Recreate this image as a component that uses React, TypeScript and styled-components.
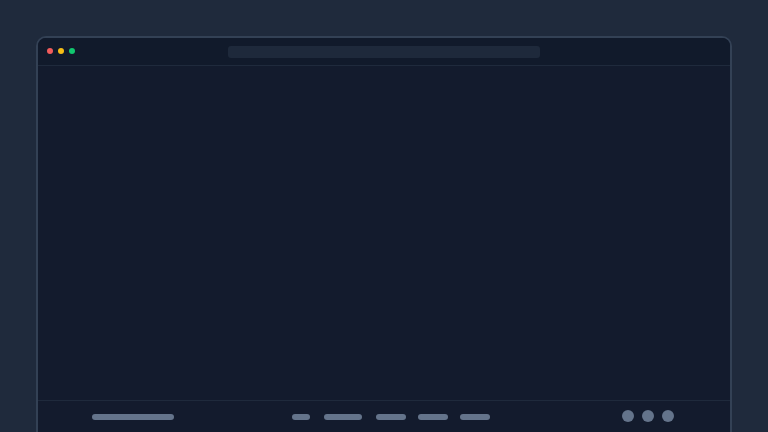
import React from 'react';
import styled, { createGlobalStyle } from 'styled-components';

const GlobalStyle = createGlobalStyle`
    html, body {
        margin: 0;
        padding: 0;
        height: 432px;
        overflow: hidden;
        background: #1f2a3c;
        font-family: "Inter", "Liberation Sans", sans-serif;
    }
`

const Page = styled.div`
    width: 768px;
    height: 432px;
    padding: 36px 36px 0;
    box-sizing: border-box;
    overflow: hidden;
`

const Window = styled.div`
    display: flex;
    flex-direction: column;
    height: 420px;
    border: 2px solid #334155;
    border-radius: 10px;
    background: #131b2d;
    overflow: hidden;
`

const TitleBar = styled.div`
    position: relative;
    display: flex;
    align-items: center;
    justify-content: center;
    height: 27px;
    flex-shrink: 0;
    background: #111a2b;
    border-bottom: 1px solid #1f2a3c;
`

const Lights = styled.div`
    position: absolute;
    left: 9px;
    top: 10px;
    display: flex;
    gap: 5px;
`

const Light = styled.span<{ color: string }>`
    width: 6px;
    height: 6px;
    border-radius: 50%;
    background: ${p => p.color};
`

const AddressBar = styled.div`
    width: 312px;
    height: 12px;
    border-radius: 3px;
    background: #1e293b;
`

const Content = styled.div`
    flex: 1;
    background: #131b2d;
`

const Footer = styled.div`
    display: flex;
    align-items: flex-start;
    height: 58px;
    padding: 9px 56px 0 54px;
    flex-shrink: 0;
    box-sizing: border-box;
    border-top: 1px solid #1f2a3c;
    background: #131b2d;
`

const Bar = styled.span<{ w: number }>`
    display: block;
    width: ${p => p.w}px;
    height: 6px;
    margin-top: 4px;
    border-radius: 3px;
    background: #64748b;
`

const NavGroup = styled.div`
    display: flex;
    margin-left: 118px;
    gap: 12px;

    & > span:nth-child(-n + 2) {
        margin-right: 2px;
    }
`

const Dots = styled.div`
    display: flex;
    gap: 8px;
    margin-left: auto;
`

const Dot = styled.span`
    width: 12px;
    height: 12px;
    border-radius: 50%;
    background: #64748b;
`

const App = () => {
    return (
        <>
            <GlobalStyle />
            <Page>
                <Window>
                    <TitleBar>
                        <Lights>
                            <Light color="#f25c5c" />
                            <Light color="#f6bd16" />
                            <Light color="#11c76f" />
                        </Lights>
                        <AddressBar />
                    </TitleBar>
                    <Content />
                    <Footer>
                        <Bar w={82} />
                        <NavGroup>
                            <Bar w={18} />
                            <Bar w={38} />
                            <Bar w={30} />
                            <Bar w={30} />
                            <Bar w={30} />
                        </NavGroup>
                        <Dots>
                            <Dot />
                            <Dot />
                            <Dot />
                        </Dots>
                    </Footer>
                </Window>
            </Page>
        </>
    );
};

export default App;
